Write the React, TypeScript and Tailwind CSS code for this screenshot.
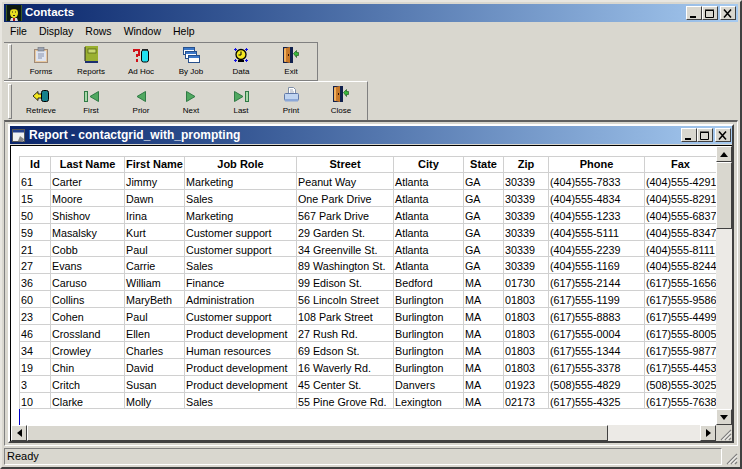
const font = "font-['Liberation_Sans',Arial,sans-serif]"

function Forms() {
  return (
    <svg width="14" height="16" viewBox="0 0 14 16">
      <rect x="0.5" y="2.5" width="13" height="13" fill="#e8c9a0" stroke="#a08a78" />
      <rect x="2" y="4" width="10" height="10" fill="#dfe4f0" />
      <rect x="4" y="0.5" width="6" height="3.5" fill="#9aa2b0" stroke="#6d7480" strokeWidth="0.6" />
      <path d="M4 7h6M4 9h6M4 11h4" stroke="#8a94ae" />
    </svg>
  )
}
function Reports() {
  return (
    <svg width="14" height="17" viewBox="0 0 14 17">
      <rect x="1" y="0" width="13" height="15" fill="#9ab030" />
      <rect x="1" y="15" width="13" height="2" fill="#1c2f70" />
      <rect x="4" y="3" width="8" height="4" fill="#c8d870" stroke="#4c5a10" strokeWidth="0.7" />
      <path d="M0 2h2M0 4h2M0 6h2M0 8h2M0 10h2M0 12h2M0 14h2" stroke="#222" />
    </svg>
  )
}
function AdHoc() {
  return (
    <svg width="16" height="14" viewBox="0 0 16 14">
      <path d="M1 3V1h5v5H4v2" fill="none" stroke="#d01018" strokeWidth="2" />
      <rect x="3" y="10" width="2" height="3" fill="#d01018" />
      <rect x="8.5" y="1" width="7" height="12" rx="2" fill="#20e0f0" stroke="#000" />
      <rect x="9" y="0" width="6" height="1.5" fill="#222" />
    </svg>
  )
}
function ByJob() {
  return (
    <svg width="17" height="16" viewBox="0 0 17 16">
      <rect x="0.5" y="0.5" width="11" height="7" fill="#fff" stroke="#27508c" />
      <rect x="1" y="1" width="10" height="2" fill="#3c78c8" />
      <rect x="2.5" y="4.5" width="11" height="7" fill="#fff" stroke="#27508c" />
      <rect x="3" y="5" width="10" height="2" fill="#3c78c8" />
      <rect x="5.5" y="8.5" width="11" height="7" fill="#fff" stroke="#27508c" />
      <rect x="6" y="9" width="10" height="2" fill="#3c78c8" />
    </svg>
  )
}
function Data() {
  return (
    <svg width="16" height="15" viewBox="0 0 16 15">
      <path d="M1 1h1V0h1v1h1v1H3v1H2V2H1zM12 1h1V0h1v1h1v1h-1v1h-1V2h-1zM1 12h1v-1h1v1h1v1H3v1H2v-1H1zM12 12h1v-1h1v1h1v1h-1v1h-1v-1h-1z" fill="#1010e0" />
      <circle cx="8" cy="6.500" r="5" fill="#f4e820" stroke="#000" strokeWidth="1.300" />
      <path d="M8 3.500v3.500H5.500" fill="none" stroke="#000" />
      <path d="M5 13h6" stroke="#000" strokeWidth="2" />
    </svg>
  )
}
function Door() {
  return (
    <svg width="16" height="16" viewBox="0 0 16 16">
      <rect x="0" y="0" width="10" height="16" fill="#10204c" />
      <path d="M1 1.500l6-1.500v16l-6-1.500z" fill="#c87828" />
      <path d="M1 1.500l2-.5v14l-2-.5z" fill="#f0b060" />
      <rect x="5" y="7" width="1" height="2" fill="#301000" />
      <path d="M10.500 6.500l3-3v2h2v3h-2v2z" fill="#38b838" stroke="#0f4a0f" strokeWidth="0.600" />
    </svg>
  )
}
function Retrieve() {
  return (
    <svg width="16" height="12" viewBox="0 0 16 12">
      <path d="M0 6l5-4.500V4h4v4H5v2.500z" fill="#f4e820" stroke="#000" strokeWidth="0.800" />
      <rect x="8.500" y="0.500" width="7" height="11" rx="2" fill="#16808c" stroke="#000" />
    </svg>
  )
}
const green = '#50a860'
const greenEdge = '#2f7a45'
function First() {
  return (
    <svg width="15" height="11" viewBox="0 0 15 11">
      <rect x="0.500" y="0.500" width="3" height="10" fill="#a8d8a8" stroke={greenEdge} />
      <path d="M14.500 0.500v10L6 5.500z" fill={green} stroke={greenEdge} />
    </svg>
  )
}
function Prior() {
  return (
    <svg width="10" height="11" viewBox="0 0 10 11">
      <path d="M9.500 0.500v10L1 5.500z" fill={green} stroke={greenEdge} />
    </svg>
  )
}
function Next() {
  return (
    <svg width="10" height="11" viewBox="0 0 10 11">
      <path d="M0.500 0.500v10L9 5.500z" fill={green} stroke={greenEdge} />
    </svg>
  )
}
function Last() {
  return (
    <svg width="15" height="11" viewBox="0 0 15 11">
      <path d="M0.500 0.500v10L9 5.500z" fill={green} stroke={greenEdge} />
      <rect x="11.500" y="0.500" width="3" height="10" fill="#a8d8a8" stroke={greenEdge} />
    </svg>
  )
}
function PrintIcon() {
  return (
    <svg width="15" height="15" viewBox="0 0 15 15">
      <path d="M4.500 0.500h5l2 2v5h-7z" fill="#fff" stroke="#8090a8" />
      <path d="M6 3h3M6 5h4" stroke="#a0a8b8" />
      <rect x="0.500" y="6.500" width="14" height="7" rx="1" fill="#c0d4f0" stroke="#6078a8" />
      <rect x="1" y="12" width="13" height="2.500" fill="#8ca8d8" />
    </svg>
  )
}
function Face() {
  return (
    <svg width="16" height="16" viewBox="0 0 16 16" className="shrink-0">
      <rect width="16" height="16" fill="#0c1a10" />
      <path d="M0 0h1v16H0zM15 0h1v16h-1z" fill="#3c5a20" />
      <path d="M4 16l1-3h6l1 3z" fill="#d8d8d8" />
      <rect x="7" y="13" width="2" height="3" fill="#b01818" />
      <ellipse cx="8" cy="8" rx="4" ry="5" fill="#e8e020" />
      <path d="M4 5c0-3 8-3 8 0-2-1-6-1-8 0z" fill="#111" />
      <path d="M6 7h1M9 7h1M7 10.500h2" stroke="#222" />
    </svg>
  )
}
function TopBarIcon() {
  return (
    <svg width="13" height="13" viewBox="0 0 13 13" className="shrink-0">
      <rect x="0.500" y="0.500" width="12" height="12" fill="#f0f0f0" stroke="#555" />
      <rect x="1" y="1" width="11" height="2.500" fill="#24408c" />
      <path d="M6 12l2-5 4 3-1 3z" fill="#888" />
    </svg>
  )
}

function WinButton({ kind }: { kind: 'min' | 'max' | 'close' }) {
  return (
    <div className="flex h-[14px] w-4 items-center justify-center border border-t-white border-l-white border-r-[#404040] border-b-[#404040] bg-[#d9d7cf]">
      <svg width="10" height="9" viewBox="0 0 10 9">
        {kind === 'min' && <rect x="1" y="7" width="6" height="2" fill="#000" />}
        {kind === 'max' && <path d="M0.500 1.500h8v7h-8zM0 1h9" fill="none" stroke="#000" />}
        {kind === 'close' && <path d="M1 0.500l7 8M8 0.500l-7 8" stroke="#000" strokeWidth="1.500" />}
      </svg>
    </div>
  )
}
function WinButtons() {
  return (
    <div className="flex items-center">
      <WinButton kind="min" />
      <WinButton kind="max" />
      <div className="w-0.5" />
      <WinButton kind="close" />
    </div>
  )
}

function Tool({ label, children }: { label: string; children: React.ReactNode }) {
  return (
    <div className="flex h-full w-[50px] flex-col items-center">
      <div className="flex h-[19px] items-end justify-center">{children}</div>
      <div className="mt-[4px] text-[8px] leading-[10px] text-black">{label}</div>
    </div>
  )
}
function Grip() {
  return <div className="mx-[4px] h-[35px] w-[4px] shrink-0 self-center border border-t-white border-l-white border-r-[#808080] border-b-[#808080] bg-[#d9d7cf]" />
}

function Arrow({ dir }: { dir: 'up' | 'down' | 'left' | 'right' }) {
  const pts = {
    up: '4,0 8,5 0,5',
    down: '0,0 8,0 4,5',
    left: '5,0 5,8 0,4',
    right: '0,0 0,8 5,4',
  }[dir]
  return (
    <svg width={dir === 'up' || dir === 'down' ? 8 : 5} height={dir === 'up' || dir === 'down' ? 5 : 8}>
      <polygon points={pts} fill="#000" />
    </svg>
  )
}
function ScrollBtn({ dir }: { dir: 'up' | 'down' | 'left' | 'right' }) {
  return (
    <div className="flex h-4 w-4 shrink-0 items-center justify-center border border-t-white border-l-white border-r-[#404040] border-b-[#404040] bg-[#d9d7cf]">
      <Arrow dir={dir} />
    </div>
  )
}
function SizeGrip() {
  return (
    <svg width="13" height="13" viewBox="0 0 13 13">
      <path d="M12 2L2 12M12 6l-6 6M12 10l-2 2" stroke="#808080" strokeWidth="1.200" />
      <path d="M12 3.500L3.500 12M12 7.500L7.500 12" stroke="#fff" />
    </svg>
  )
}

const cols = [
  { name: 'Id', w: 'w-[32px]' },
  { name: 'Last Name', w: 'w-[74px]' },
  { name: 'First Name', w: 'w-[60px]' },
  { name: 'Job Role', w: 'w-[112px]' },
  { name: 'Street', w: 'w-[97px]' },
  { name: 'City', w: 'w-[70px]' },
  { name: 'State', w: 'w-[40px]' },
  { name: 'Zip', w: 'w-[45px]' },
  { name: 'Phone', w: 'w-[96px]' },
  { name: 'Fax', w: 'w-[72px]' },
]

const rows = [
  ['61', 'Carter', 'Jimmy', 'Marketing', 'Peanut Way', 'Atlanta', 'GA', '30339', '(404)555-7833', '(404)555-4291'],
  ['15', 'Moore', 'Dawn', 'Sales', 'One Park Drive', 'Atlanta', 'GA', '30339', '(404)555-4834', '(404)555-8291'],
  ['50', 'Shishov', 'Irina', 'Marketing', '567 Park Drive', 'Atlanta', 'GA', '30339', '(404)555-1233', '(404)555-6837'],
  ['59', 'Masalsky', 'Kurt', 'Customer support', '29 Garden St.', 'Atlanta', 'GA', '30339', '(404)555-5111', '(404)555-8347'],
  ['21', 'Cobb', 'Paul', 'Customer support', '34 Greenville St.', 'Atlanta', 'GA', '30339', '(404)555-2239', '(404)555-8111'],
  ['27', 'Evans', 'Carrie', 'Sales', '89 Washington St.', 'Atlanta', 'GA', '30339', '(404)555-1169', '(404)555-8244'],
  ['36', 'Caruso', 'William', 'Finance', '99 Edison St.', 'Bedford', 'MA', '01730', '(617)555-2144', '(617)555-1656'],
  ['60', 'Collins', 'MaryBeth', 'Administration', '56 Lincoln Street', 'Burlington', 'MA', '01803', '(617)555-1199', '(617)555-9586'],
  ['23', 'Cohen', 'Paul', 'Customer support', '108 Park Street', 'Burlington', 'MA', '01803', '(617)555-8883', '(617)555-4499'],
  ['46', 'Crossland', 'Ellen', 'Product development', '27 Rush Rd.', 'Burlington', 'MA', '01803', '(617)555-0004', '(617)555-8005'],
  ['34', 'Crowley', 'Charles', 'Human resources', '69 Edson St.', 'Burlington', 'MA', '01803', '(617)555-1344', '(617)555-9877'],
  ['19', 'Chin', 'David', 'Product development', '16 Waverly Rd.', 'Burlington', 'MA', '01803', '(617)555-3378', '(617)555-4453'],
  ['3', 'Critch', 'Susan', 'Product development', '45 Center St.', 'Danvers', 'MA', '01923', '(508)555-4829', '(508)555-3025'],
  ['10', 'Clarke', 'Molly', 'Sales', '55 Pine Grove Rd.', 'Lexington', 'MA', '02173', '(617)555-4325', '(617)555-7638'],
]

export default function App() {
  return (
    <div className={`${font} flex h-[469px] w-[742px] flex-col overflow-hidden border-2 border-t-[#e8e6e0] border-l-[#e8e6e0] border-r-[#404040] border-b-[#404040] bg-[#d9d7cf] p-0.5 text-black`}>
      <div className="flex h-[18px] shrink-0 items-center gap-[3px] bg-gradient-to-r from-[#0a246a] to-[#a6caf0] pr-0.5 pl-0.5">
        <Face />
        <div className="flex-1 text-[11.500px] font-bold text-white">Contacts</div>
        <WinButtons />
      </div>

      <div className="flex h-5 shrink-0 items-center gap-3 pl-[6px] text-[10.500px]">
        <span>File</span>
        <span>Display</span>
        <span>Rows</span>
        <span>Window</span>
        <span>Help</span>
      </div>

      <div className="flex h-[39px] w-[314px] shrink-0 items-center border-t border-r border-b border-t-[#808080] border-r-[#808080] border-b-[#808080]">
        <Grip />
        <div className="flex h-full items-start pt-[1px]">
          <Tool label="Forms"><Forms /></Tool>
          <Tool label="Reports"><Reports /></Tool>
          <Tool label="Ad Hoc"><AdHoc /></Tool>
          <Tool label="By Job"><ByJob /></Tool>
          <Tool label="Data"><Data /></Tool>
          <Tool label="Exit"><Door /></Tool>
        </div>
      </div>

      <div className="flex h-[39px] w-[364px] shrink-0 items-center border-t border-r border-t-white border-r-[#808080]">
        <Grip />
        <div className="flex h-full items-start pt-[1px]">
          <Tool label="Retrieve"><Retrieve /></Tool>
          <Tool label="First"><First /></Tool>
          <Tool label="Prior"><Prior /></Tool>
          <Tool label="Next"><Next /></Tool>
          <Tool label="Last"><Last /></Tool>
          <Tool label="Print"><PrintIcon /></Tool>
          <Tool label="Close"><Door /></Tool>
        </div>
      </div>

      {/* mdi client area */}
      <div className="min-h-0 flex-1 border-t-2 border-b border-l border-r border-t-[#606060] border-b-white border-l-[#808080] border-r-white px-[3px] pt-[2px] pb-[2px]">
        <div className="flex h-full flex-col border-2 border-t-white border-l-white border-r-[#404040] border-b-[#404040] bg-[#d9d7cf]">
          <div className="flex h-[18px] shrink-0 items-center gap-[4px] bg-gradient-to-r from-[#0a246a] to-[#a6caf0] pr-px pl-[2px]">
            <TopBarIcon />
            <div className="flex-1 text-[12px] font-bold text-white">Report - contactgrid_with_prompting</div>
            <WinButtons />
          </div>

          <div className="mt-px flex min-h-0 flex-1 flex-col border-t border-l border-[#000]">
            <div className="flex min-h-0 flex-1">
              <div className="flex min-w-0 flex-1 flex-col bg-white pt-[10px] pl-2 text-[10.750px]">
                <div className="flex-none overflow-hidden">
                  <div className="flex h-[17px] font-bold">
                    {cols.map(c => (
                      <div key={c.name} className={`${c.w} flex shrink-0 items-center justify-center border-t border-r border-b border-[#d0d0d0] text-[11px] leading-none whitespace-nowrap first:border-l`}>
                        {c.name}
                      </div>
                    ))}
                  </div>
                  {rows.map(r => (
                    <div key={r[0]} className="flex h-[16.9px]">
                      {r.map((v, i) => (
                        <div key={i} className={`${cols[i].w} shrink-0 overflow-hidden border-r border-b border-[#d0d0d0] pl-px leading-[19px] whitespace-nowrap first:border-l`}>
                          {v}
                        </div>
                      ))}
                    </div>
                  ))}
                </div>
                <div className="flex-1 border-l border-[#0000c8]" />
              </div>
              <div className="flex w-4 shrink-0 flex-col bg-[#eceae6]">
                <ScrollBtn dir="up" />
                <div className="h-[67px] w-4 border border-t-white border-l-white border-r-[#404040] border-b-[#404040] bg-[#d9d7cf]" />
                <div className="flex-1" />
                <ScrollBtn dir="down" />
              </div>
            </div>
            <div className="flex h-4 shrink-0 bg-[#eceae6]">
              <ScrollBtn dir="left" />
              <div className="w-[581px] border border-t-white border-l-white border-r-[#404040] border-b-[#404040] bg-[#d9d7cf]" />
              <div className="flex-1" />
              <ScrollBtn dir="right" />
              <div className="flex w-4 shrink-0 items-end justify-end bg-[#d9d7cf]">
                <SizeGrip />
              </div>
            </div>
          </div>
        </div>
      </div>

      <div className="flex h-[19px] shrink-0 items-end">
        <div className="flex h-[17px] flex-1 items-center border border-t-[#808080] border-l-[#808080] border-r-white border-b-white pl-[2px] text-[11px]">
          Ready
        </div>
        <div className="flex w-4 justify-end self-end">
          <SizeGrip />
        </div>
      </div>
    </div>
  )
}
